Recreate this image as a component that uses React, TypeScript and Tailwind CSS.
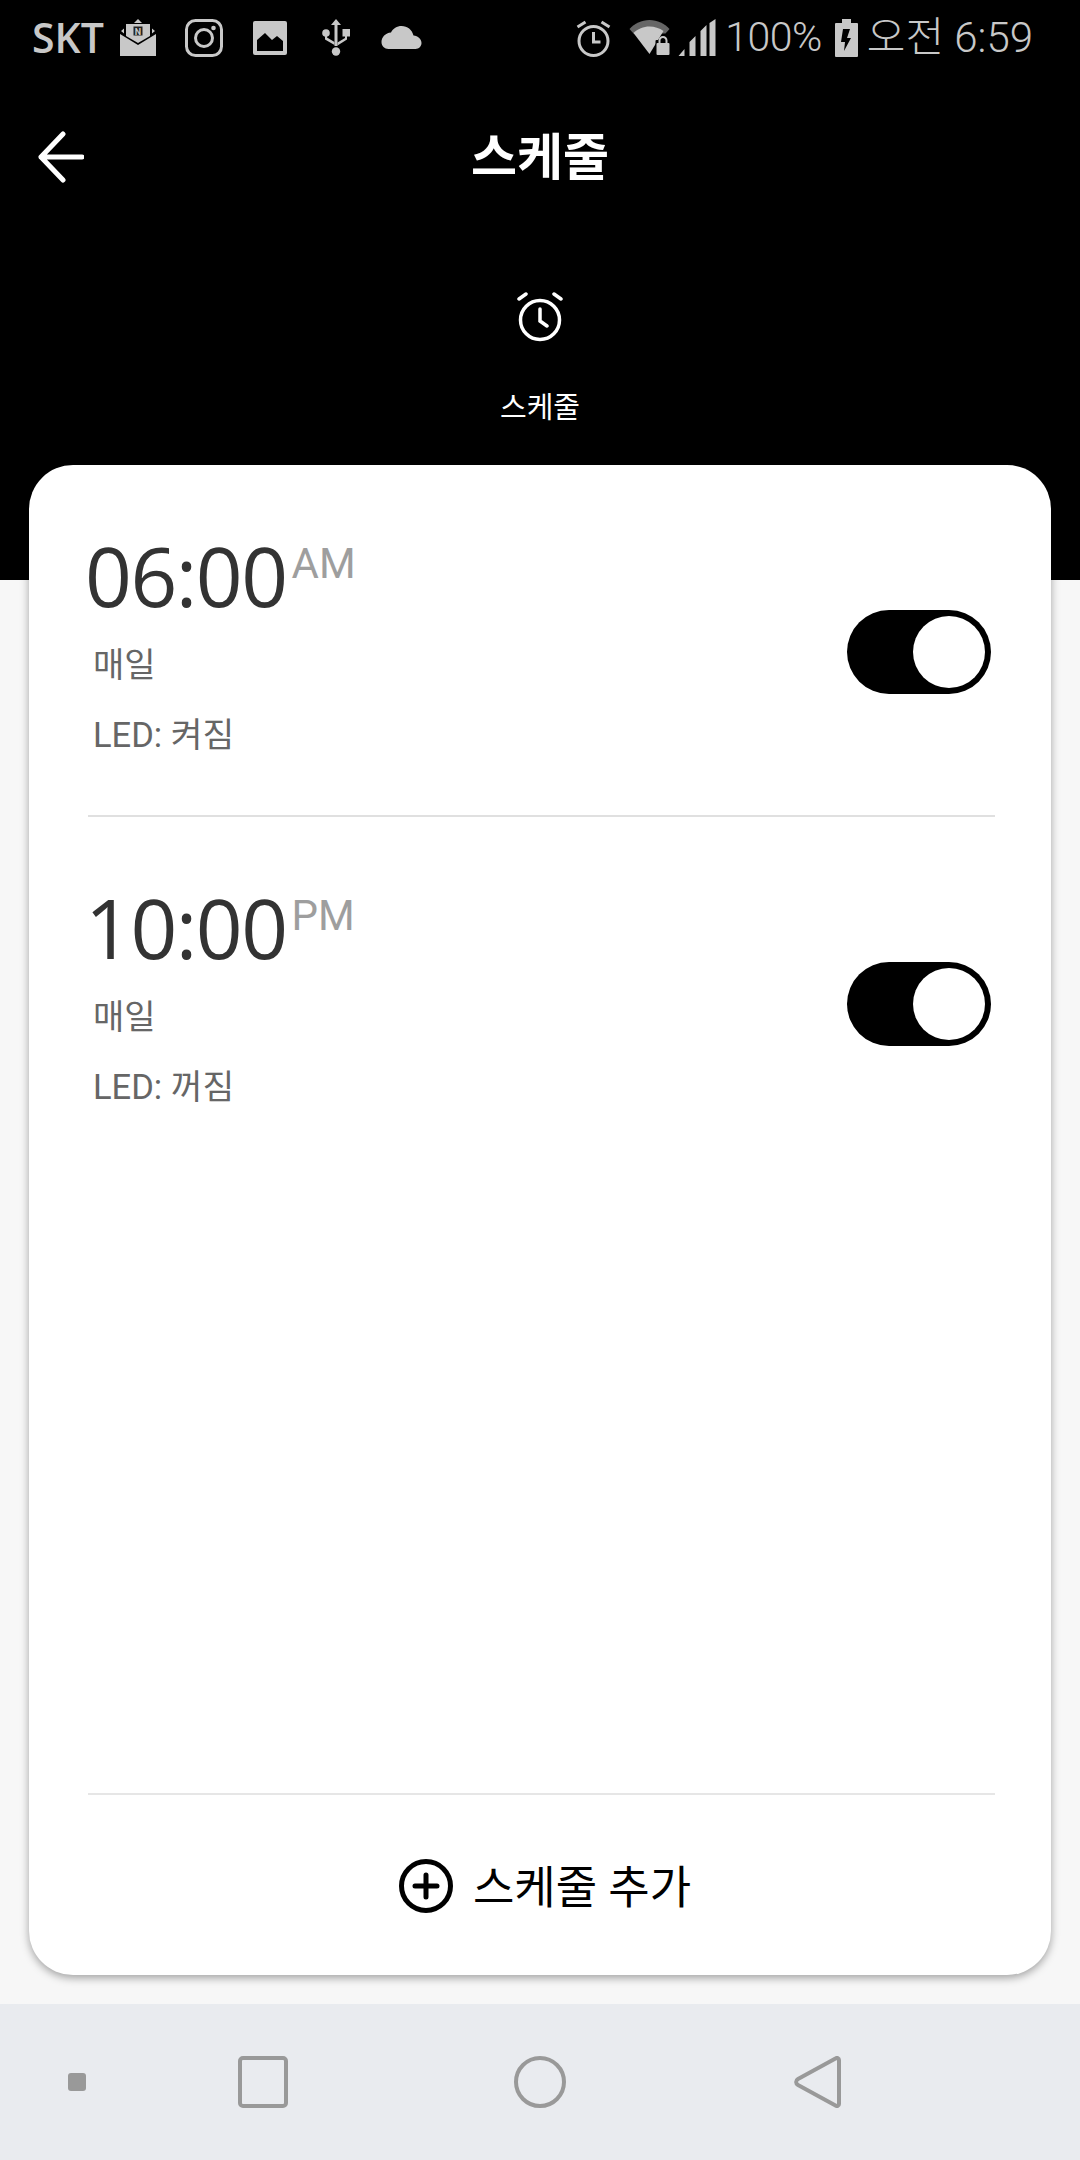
const krFont = "font-['Roboto','Noto_Sans_CJK_KR',sans-serif]";

function StatusIcons() {
  return (
    <div className="flex items-center">
      {/* mail with N badge */}
      <svg className="ml-[16px]" width="36" height="37" viewBox="0 0 36 37" fill="#c8c8c8">
        <path d="M6 5h24v12l-12 7L6 17z" />
        <path d="M14 4l4-4 4 4z" />
        <path d="M0 15l18 11 18-11v22H0z" />
        <path d="M1 12l3-2.500v5zM35 12l-3-2.500v5z" />
        <rect x="13.500" y="7.500" width="9" height="9" fill="#222" />
        <text x="18" y="15.500" textAnchor="middle" fontSize="9" fontWeight="700" fontFamily="Roboto, sans-serif" fill="#c8c8c8">N</text>
      </svg>
      <svg className="ml-[29px]" width="38" height="38" viewBox="0 0 38 38" fill="none" stroke="#c8c8c8" strokeWidth="3">
        <rect x="1.500" y="1.500" width="35" height="35" rx="9" />
        <circle cx="19" cy="19" r="8.500" />
        <circle cx="28.500" cy="9" r="2.300" fill="#c8c8c8" stroke="none" />
      </svg>
      <svg className="ml-[30px]" width="34" height="34" viewBox="0 0 34 34">
        <rect width="34" height="34" rx="2" fill="#c8c8c8" />
        <path d="M4 30V19l8-7 7 7 5-4 6 5v10z" fill="#000" />
      </svg>
      <svg className="ml-[35px]" width="28" height="37" viewBox="0 0 28 37" fill="#c8c8c8">
        <path d="M14 0l5 6h-3.500v21h-3V6H9z" />
        <circle cx="14" cy="32.500" r="4.200" />
        <circle cx="4" cy="14" r="3.800" />
        <rect x="20.500" y="10" width="7.500" height="7.500" />
        <path d="M3 14h2v4.500l7.500 4.500v3L3 20.500zM23 16h2v4.500l-9.500 6v-3l7.500-4.500z" />
      </svg>
      <svg className="ml-[31px]" width="41" height="23" viewBox="0 0 40 23" fill="#c8c8c8">
        <path d="M32 9.500C30.500 3.800 26 0 20 0 15.500 0 11.500 2.500 9.500 6.500 4 7 0 11 0 16c0 4 3 7 7 7h27c3.500 0 6-2.800 6-6 0-3.800-3.500-7-8-7.500z" />
      </svg>
    </div>
  );
}

function StatusRight() {
  return (
    <div className="flex items-center">
      <svg width="35" height="38" viewBox="0 0 34 38" fill="none" stroke="#c8c8c8" strokeWidth="3">
        <circle cx="17" cy="22" r="14.500" />
        <path d="M17 13v10h7M1 8l8-5M33 8l-8-5" />
      </svg>
      <svg className="ml-[18px]" width="41" height="35" viewBox="0 0 40 35">
        <path d="M0 9C5 3.500 12 0 20 0s15 3.500 20 9l-4 4.500H4z" fill="#666" />
        <path d="M4 13c4-4 10-6.500 16-6.500 5 0 10 1.500 14 4.500L20 34z" fill="#c8c8c8" />
        <rect x="26" y="20" width="14" height="15" rx="1" fill="#000" />
        <rect x="27" y="23" width="13" height="12" rx="1" fill="#c8c8c8" />
        <path d="M30 23v-2.500a3.500 3.500 0 0 1 7 0V23" fill="none" stroke="#c8c8c8" strokeWidth="2" />
      </svg>
      <svg className="ml-[8px]" width="38" height="37" viewBox="0 0 37 37" fill="#c8c8c8">
        <path d="M0 37l6-7v7zM11 37V23l6-6v20zM22 37V12l6-6v31zM31 37V4l6-4v37z" />
      </svg>
      <span className="ml-[9px] text-[41px] leading-none text-[#c8c8c8] font-['Roboto',sans-serif] font-light tracking-[-0.5px]">100%</span>
      <svg className="ml-[12px]" width="25" height="38" viewBox="0 0 23 38">
        <path d="M7 0h9v4h6a1 1 0 0 1 1 1v32a1 1 0 0 1-1 1H1a1 1 0 0 1-1-1V5a1 1 0 0 1 1-1h6z" fill="#c8c8c8" />
        <path d="M13 10H8l-2 13h4l-1 9 7-13h-4l3-9z" fill="#000" />
      </svg>
      <span className="ml-[8px] text-[42px] leading-none text-[#c8c8c8] font-['Roboto','Noto_Sans_CJK_KR',sans-serif] font-light whitespace-nowrap">오전 6:59</span>
    </div>
  );
}

function AlarmIcon() {
  return (
    <svg width="46" height="52" viewBox="0 0 46 52" fill="none" stroke="#fff" strokeWidth="3.500" strokeLinecap="round">
      <circle cx="23" cy="30" r="19.500" />
      <path d="M23 19v12l7 5M2 9l7-5M44 9l-7-5" />
    </svg>
  );
}

function Toggle() {
  return (
    <div className="mt-[80px] flex h-[84px] w-[144px] items-center justify-end rounded-full bg-black pr-[6px]">
      <div className="h-[72px] w-[72px] rounded-full bg-white" />
    </div>
  );
}

function ScheduleRow({ time, period, led }: { time: string; period: string; led: string }) {
  return (
    <div className="flex h-[350px] items-start justify-between pl-[56px] pr-[60px] pt-[65px]">
      <div>
        <div className="flex h-[90px] items-start">
          <span className="text-[82px] leading-[90px] tracking-[-1.5px] text-[#333333] font-['Open_Sans',sans-serif]">{time}</span>
          <span className="ml-[5px] mt-[12px] text-[42px] leading-[44px] text-[#9e9e9e] font-['Roboto',sans-serif]">{period}</span>
        </div>
        <div className={`mt-[22px] pl-[8px] text-[34px] leading-[46px] text-[#666666] ${krFont}`}>매일</div>
        <div className={`mt-[24px] pl-[8px] text-[34.500px] leading-[46px] text-[#666666] ${krFont}`}>LED: {led}</div>
      </div>
      <Toggle />
    </div>
  );
}

export default function App() {
  return (
    <div className="flex h-[2160px] w-[1080px] flex-col overflow-hidden bg-[#f7f7f7]">
      <header className="h-[580px] shrink-0 bg-black">
        <div className="flex h-[75px] items-center justify-between pl-[32px] pr-[47px]">
          <div className="flex items-center">
            <span className="text-[41px] leading-none font-semibold text-[#c8c8c8] font-['Open_Sans',sans-serif]">SKT</span>
            <StatusIcons />
          </div>
          <StatusRight />
        </div>
        <div className="relative flex h-[164px] items-center justify-center">
          <svg className="absolute left-[38px] top-[56px]" width="46" height="52" viewBox="0 0 46 52" fill="none" stroke="#fff" strokeWidth="5" strokeLinecap="round" strokeLinejoin="round">
            <path d="M44 26H3M25 3L3 26l22 23" />
          </svg>
          <h1 className={`mt-[2px] text-[50px] font-bold leading-none text-white ${krFont}`}>스케줄</h1>
        </div>
        <div className="flex flex-col items-center pt-[51px]">
          <AlarmIcon />
          <span className={`mt-[46px] text-[29px] leading-[40px] text-white ${krFont}`}>스케줄</span>
        </div>
      </header>

      <main className="relative mx-[29px] -mt-[115px] flex h-[1510px] flex-col rounded-[44px] bg-white shadow-[0_3px_9px_rgba(0,0,0,0.35)]">
        <ScheduleRow time="06:00" period="AM" led="켜짐" />
        <div className="ml-[59px] mr-[56px] h-[2px] bg-[#e0e0e0]" />
        <ScheduleRow time="10:00" period="PM" led="꺼짐" />
        <div className="flex-1" />
        <div className="ml-[59px] mr-[56px] h-[2px] bg-[#e6e6e6]" />
        <button className="flex h-[180px] items-center justify-center pl-[10px] pt-[7px] text-black">
          <svg className="-mt-[6px]" width="54" height="54" viewBox="0 0 54 54" fill="none" stroke="#000" strokeWidth="5" strokeLinecap="round">
            <circle cx="27" cy="27" r="24.500" />
            <path d="M27 16v22M16 27h22" />
          </svg>
          <span className={`ml-[20px] text-[45px] leading-none ${krFont}`}>스케줄 추가</span>
        </button>
      </main>

      <nav className="mt-auto flex h-[156px] items-center bg-[#e9ebef]">
        <div className="ml-[68px] h-[18px] w-[18px] rounded-[3px] bg-[#999999]" />
        <div className="ml-[152px] h-[52px] w-[50px] rounded-[5px] border-[4px] border-[#999999]" />
        <div className="ml-[226px] h-[52px] w-[52px] rounded-full border-[4px] border-[#999999]" />
        <svg className="ml-[228px]" width="48" height="52" viewBox="0 0 48 52" fill="none" stroke="#999999" strokeWidth="4" strokeLinejoin="round">
          <path d="M45 4c0-2-2-2.500-3.500-1.500L4 23c-2.500 1.500-2.500 4.500 0 6l37.500 20.500c1.500 1 3.500.5 3.500-1.500z" />
        </svg>
      </nav>
    </div>
  );
}
